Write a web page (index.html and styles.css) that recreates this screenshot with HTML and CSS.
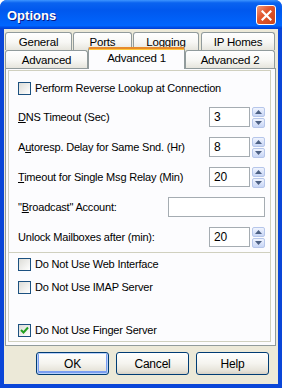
FILE: index.html
```html
<!DOCTYPE html>
<html lang="en">
<head>
  <meta charset="UTF-8" />
  <title>Options</title>
  <link rel="stylesheet" href="styles.css">
</head>
<body>
  <div class="window">
    <div class="titlebar">
      <span class="title">Options</span>
      <div class="close">
        <svg width="11" height="11" viewBox="0 0 11 11"><path d="M1.5 1.5 L9.5 9.5 M9.5 1.5 L1.5 9.5" stroke="#fff" stroke-width="2.2" stroke-linecap="square"/></svg>
      </div>
    </div>

    <div class="client">
      <div class="tab-row back">
        <div class="tab t-general">General</div>
        <div class="tab t-ports">Ports</div>
        <div class="tab t-logging">Logging</div>
        <div class="tab t-iphomes">IP Homes</div>
      </div>
      <div class="tab-row front">
        <div class="tab t-advanced">Advanced</div>
        <div class="tab active t-adv1">Advanced 1</div>
        <div class="tab t-adv2">Advanced 2</div>
      </div>

      <div class="panel">
        <div class="group first">
          <label class="check-row">
            <span class="checkbox"></span>
            <span>Perform Reverse Lookup at Connection</span>
          </label>

          <div class="field-row dns">
            <span class="label"><u>D</u>NS Timeout (Sec)</span>
            <span class="edit small">3</span>
            <span class="spinner">
              <span class="spin up"><svg width="7" height="4" viewBox="0 0 7 4"><path d="M0 4 L3.5 0 L7 4Z" fill="#4d6185"/></svg></span>
              <span class="spin down"><svg width="7" height="4" viewBox="0 0 7 4"><path d="M0 0 L3.5 4 L7 0Z" fill="#4d6185"/></svg></span>
            </span>
          </div>

          <div class="field-row">
            <span class="label">A<u>u</u>toresp. Delay for Same Snd. (Hr)</span>
            <span class="edit small">8</span>
            <span class="spinner">
              <span class="spin up"><svg width="7" height="4" viewBox="0 0 7 4"><path d="M0 4 L3.5 0 L7 4Z" fill="#4d6185"/></svg></span>
              <span class="spin down"><svg width="7" height="4" viewBox="0 0 7 4"><path d="M0 0 L3.5 4 L7 0Z" fill="#4d6185"/></svg></span>
            </span>
          </div>

          <div class="field-row">
            <span class="label"><u>T</u>imeout for Single Msg Relay (Min)</span>
            <span class="edit small">20</span>
            <span class="spinner">
              <span class="spin up"><svg width="7" height="4" viewBox="0 0 7 4"><path d="M0 4 L3.5 0 L7 4Z" fill="#4d6185"/></svg></span>
              <span class="spin down"><svg width="7" height="4" viewBox="0 0 7 4"><path d="M0 0 L3.5 4 L7 0Z" fill="#4d6185"/></svg></span>
            </span>
          </div>

          <div class="field-row">
            <span class="label">"<u>B</u>roadcast" Account:</span>
            <span class="edit wide"></span>
          </div>

          <div class="field-row">
            <span class="label">Unlock Mailboxes after (min):</span>
            <span class="edit small">20</span>
            <span class="spinner">
              <span class="spin up"><svg width="7" height="4" viewBox="0 0 7 4"><path d="M0 4 L3.5 0 L7 4Z" fill="#4d6185"/></svg></span>
              <span class="spin down"><svg width="7" height="4" viewBox="0 0 7 4"><path d="M0 0 L3.5 4 L7 0Z" fill="#4d6185"/></svg></span>
            </span>
          </div>
        </div>

        <div class="group second">
          <label class="check-row">
            <span class="checkbox"></span>
            <span>Do Not Use Web Interface</span>
          </label>
          <label class="check-row imap">
            <span class="checkbox"></span>
            <span>Do Not Use IMAP Server</span>
          </label>
          <label class="check-row finger">
            <span class="checkbox checked">
              <svg width="9" height="9" viewBox="0 0 9 9"><path d="M1 4 L3.5 6.5 L8 1.5" fill="none" stroke="#21a121" stroke-width="2"/></svg>
            </span>
            <span>Do Not Use Finger Server</span>
          </label>
        </div>
      </div>

      <div class="buttons">
        <div class="btn default">OK</div>
        <div class="btn">Cancel</div>
        <div class="btn">Help</div>
      </div>
    </div>
  </div>
</body>
</html>
```

FILE: styles.css
```css
* {
  box-sizing: border-box;
  margin: 0;
  padding: 0;
}

body {
  width: 282px;
  height: 388px;
  font-family: 'Liberation Sans', Arial, sans-serif;
  font-size: 11px;
  letter-spacing: -0.2px;
  color: #000;
  background: #fff;
}

.window {
  width: 282px;
  height: 388px;
  display: flex;
  flex-direction: column;
  background: #0a46d8;
  border-radius: 7px 7px 0 0;
}

/* title bar */

.titlebar {
  height: 29px;
  flex: none;
  display: flex;
  align-items: center;
  justify-content: space-between;
  padding: 1px 6px 0 7px;
  border-radius: 7px 7px 0 0;
  background: linear-gradient(#3d95ff 0%, #0a63f0 10%, #0058ee 35%, #0062fa 75%, #0066ff 88%, #0050e6 94%, #003dd7 100%);
}

.title {
  color: #fff;
  font-weight: bold;
  font-size: 13px;
  letter-spacing: 0;
  text-shadow: 1px 1px 0 #0a1883;
}

.close {
  width: 20px;
  height: 20px;
  border: 1px solid #fff;
  border-radius: 3px;
  background: linear-gradient(135deg, #f09a7c 0%, #e2572f 40%, #cc4418 100%);
  display: flex;
  align-items: center;
  justify-content: center;
}

/* client area */

.client {
  flex: 1;
  display: flex;
  flex-direction: column;
  margin: 0 4px 4px 4px;
  padding: 3px 2px 0 1px;
  background: #ece9d8;
}

.tab-row {
  display: flex;
  height: 18px;
}

.tab {
  height: 18px;
  border: 1px solid #919b9c;
  border-bottom: none;
  border-radius: 3px 3px 0 0;
  background: linear-gradient(#ffffff, #f7f7f4 55%, #e6e5dd);
  display: flex;
  align-items: center;
  justify-content: center;
  padding-top: 1px;
  font-size: 11.5px;
}

.t-general { width: 67px; }
.t-ports { width: 59px; margin-left: 1px; }
.t-logging { width: 66px; margin-left: 1px; }
.t-iphomes { width: 74px; margin-left: 2px; }

.t-advanced { width: 83px; }
.t-adv1 { width: 97px; }
.t-adv2 { width: 90px; }

.tab.active {
  height: 22px;
  margin-top: -3px;
  position: relative;
  z-index: 2;
  background: #fcfcfe;
  border-top: 2px solid #e68b2c;
  box-shadow: inset 0 1px 0 #ffc73c;
  border-radius: 2px 2px 0 0;
  padding-top: 0;
  padding-bottom: 2px;
}

.panel {
  width: 271px;
  border: 1px solid #919b9c;
  background: #fcfcfe;
  padding: 1px 4px 3px 2px;
}

.group {
  border: 1px solid #d0d0bf;
}

.group.first {
  padding: 7px 5px 5px 9px;
}

.group.second {
  border-top: none;
  padding: 1px 5px 1px 9px;
}

.check-row {
  height: 20px;
  display: flex;
  align-items: center;
  gap: 4px;
}

.checkbox {
  width: 13px;
  height: 13px;
  border: 1px solid #1c5180;
  background: linear-gradient(135deg, #dcdcd7, #ffffff);
  display: flex;
  align-items: center;
  justify-content: center;
}

.check-row.imap {
  margin-top: 3px;
}

.check-row.finger {
  margin-top: 23px;
}

.field-row {
  height: 20px;
  display: flex;
  align-items: center;
  margin-top: 10px;
}

.field-row.dns {
  margin-top: 9px;
}

.label {
  flex: 1;
}

.edit {
  height: 20px;
  border: 1px solid #a5acb2;
  background: #fff;
  display: flex;
  align-items: center;
  padding-left: 4px;
  font-size: 12px;
}

.edit.small {
  width: 41px;
}

.edit.wide {
  width: 97px;
}

.spinner {
  width: 13px;
  height: 21px;
  margin-left: 2px;
  display: flex;
  flex-direction: column;
  justify-content: space-between;
}

.spin {
  height: 10px;
  border: 1px solid #b6c6ea;
  border-radius: 2px;
  background: linear-gradient(#f0f4fe, #c8d6f6);
  display: flex;
  align-items: center;
  justify-content: center;
}

/* dialog buttons */

.buttons {
  display: flex;
  justify-content: flex-end;
  gap: 7px;
  margin-top: 6px;
  padding-right: 7px;
}

.btn {
  width: 73px;
  height: 23px;
  border: 1px solid #003c74;
  border-radius: 3px;
  background: linear-gradient(#ffffff, #f5f4ef 50%, #e6e3d9 85%, #d6d0c5);
  display: flex;
  align-items: center;
  justify-content: center;
  font-size: 12px;
}

.btn.default {
  box-shadow: inset 0 0 0 1px #b9d1fa, inset 0 -1px 0 2px #7b9ef0;
}
```
